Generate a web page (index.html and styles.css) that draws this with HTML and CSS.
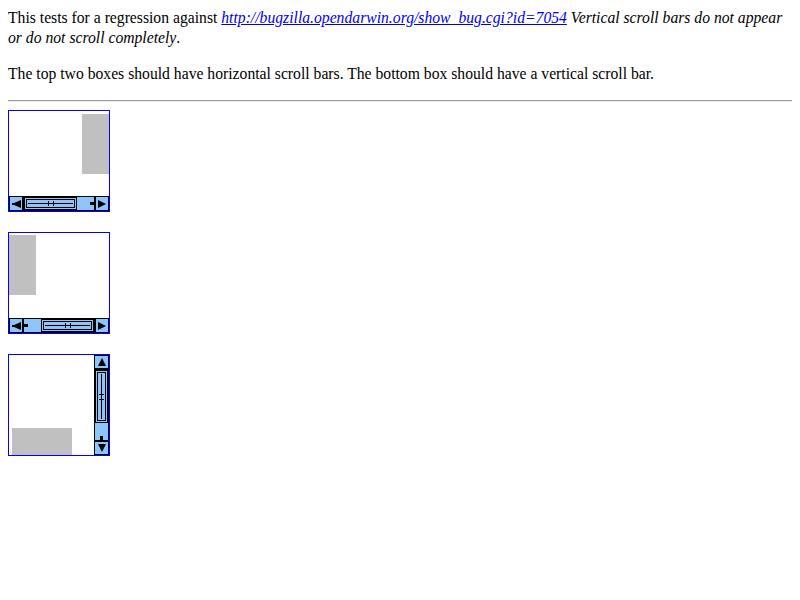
FILE: index.html
```html
<!DOCTYPE html>
<html>
<head>
<meta charset="utf-8">
<link rel="stylesheet" href="styles.css">
</head>
<body>
<div class="intro">This tests for a regression against <a href="#"><i>http://bugzilla.opendarwin.org/show_bug.cgi?id=7054</i></a> <i>Vertical scroll bars do not appear or do not scroll completely</i>.</div>
<p class="note">The top two boxes should have horizontal scroll bars. The bottom box should have a vertical scroll bar.</p>
<hr class="rule">
<div class="boxes">
  <div class="box hbox">
    <div class="content"><div class="gray g1"></div></div>
    <div class="hbar">
      <div class="btn btn-l"><svg width="9" height="8" viewBox="0 0 9 8"><path d="M0 3 L2 3 L9 0 L9 8 L2 5 L0 5 Z"/></svg></div>
      <div class="track">
        <div class="thumb hthumb"><span class="tick t1"></span><span class="tick t2"></span></div>
        <div class="gap"><span class="nub"></span></div>
      </div>
      <div class="btn btn-r"><svg width="8" height="8" viewBox="0 0 8 8"><path d="M8 4 L0 0 L0 8 Z"/></svg></div>
    </div>
  </div>
  <div class="box hbox">
    <div class="content"><div class="gray g2"></div></div>
    <div class="hbar">
      <div class="btn btn-l"><svg width="9" height="8" viewBox="0 0 9 8"><path d="M0 3 L2 3 L9 0 L9 8 L2 5 L0 5 Z"/></svg></div>
      <div class="track">
        <div class="gap gap-start"><span class="nub"></span></div>
        <div class="thumb hthumb"><span class="tick t1"></span><span class="tick t2"></span></div>
      </div>
      <div class="btn btn-r"><svg width="8" height="8" viewBox="0 0 8 8"><path d="M8 4 L0 0 L0 8 Z"/></svg></div>
    </div>
  </div>
  <div class="box vbox">
    <div class="content vcontent"><div class="gray g3"></div></div>
    <div class="vbar">
      <div class="btn btn-u"><svg width="8" height="8" viewBox="0 0 8 8"><path d="M4 0 L8 8 L0 8 Z"/></svg></div>
      <div class="vtrack">
        <div class="thumb vthumb"><span class="vtick v1"></span><span class="vtick v2"></span></div>
        <div class="vgap"><span class="vnub"></span></div>
      </div>
      <div class="btn btn-d"><svg width="8" height="8" viewBox="0 0 8 8"><path d="M4 8 L8 0 L0 0 Z"/></svg></div>
    </div>
  </div>
</div>
</body>
</html>
```

FILE: styles.css
```css
body {
  margin: 8px;
  font-family: "Liberation Serif", "Times New Roman", serif;
  font-size: 15.68px;
  line-height: 20px;
  color: #000;
  background: #fff;
}
a { color: #0000ee; }
.intro { margin: 0; }
.note { margin: 16px 0; }
.rule {
  margin: 0 0 8px;
  border: 0;
  border-top: 1px solid #9a9a9a;
  border-bottom: 1px solid #eeeeee;
  height: 0;
}
.boxes {
  display: flex;
  flex-direction: column;
  align-items: flex-start;
  gap: 20px;
}
.box {
  width: 100px;
  height: 100px;
  border: 1px solid #0000ff;
  display: flex;
  overflow: hidden;
  background: #fff;
}
.hbox { flex-direction: column; }
.vbox { flex-direction: row; }
.content {
  flex: 1;
  position: relative;
  overflow: hidden;
}
.gray { background: #c0c0c0; }
.g1 { width: 60px; height: 60px; margin: 3px 0 0 73px; }
.g2 { width: 27px; height: 60px; margin: 2px 0 0 0; }
.vcontent { display: flex; flex-direction: column; justify-content: flex-end; }
.g3 { width: 60px; height: 27px; margin-left: 3px; }

.hbar {
  height: 15px;
  display: flex;
  background: #8ec5f8;
  border-top: 1px solid #000;
  border-bottom: 1px solid #000;
  box-sizing: border-box;
}
.btn {
  width: 15px;
  display: flex;
  align-items: center;
  justify-content: center;
  background: #8ec5f8;
  box-sizing: border-box;
  flex: none;
}
.btn svg { display: block; fill: #000; }
.btn-l { border-left: 1px solid #000; border-right: 2px solid #000; }
.btn-r { border-left: 2px solid #000; border-right: 1px solid #000; }
.track {
  flex: 1;
  display: flex;
}
.thumb {
  position: relative;
  box-sizing: border-box;
  border: 3px double #000;
  flex: none;
}
.hthumb { width: 53px; }
.hthumb::before {
  content: "";
  position: absolute;
  left: 1px; right: 1px; top: 3px;
  height: 1px;
  background: #000;
}
.tick {
  position: absolute;
  top: 1px;
  width: 1px;
  height: 5px;
  background: #000;
}
.t1 { left: 21px; }
.t2 { left: 26px; }
.gap {
  flex: 1;
  display: flex;
  align-items: center;
  justify-content: flex-end;
}
.gap-start { justify-content: flex-start; }
.nub {
  width: 4px;
  height: 3px;
  background: #000;
}

.vbar {
  width: 15px;
  display: flex;
  flex-direction: column;
  background: #8ec5f8;
  border-left: 1px solid #000;
  border-right: 1px solid #000;
  box-sizing: border-box;
  flex: none;
}
.vbar .btn { width: auto; height: 15px; }
.btn-u { border-top: 1px solid #000; border-bottom: 2px solid #000; }
.btn-d { border-top: 2px solid #000; border-bottom: 1px solid #000; }
.vtrack { flex: 1; display: flex; flex-direction: column; }
.vthumb { height: 53px; }
.vthumb::before {
  content: "";
  position: absolute;
  top: 1px; bottom: 1px; left: 3px;
  width: 1px;
  background: #000;
}
.vtick {
  position: absolute;
  left: 1px;
  height: 1px;
  width: 5px;
  background: #000;
}
.v1 { top: 21px; }
.v2 { top: 26px; }
.vgap {
  flex: 1;
  display: flex;
  flex-direction: column;
  justify-content: flex-end;
  align-items: center;
}
.vnub { width: 3px; height: 4px; background: #000; }
```
